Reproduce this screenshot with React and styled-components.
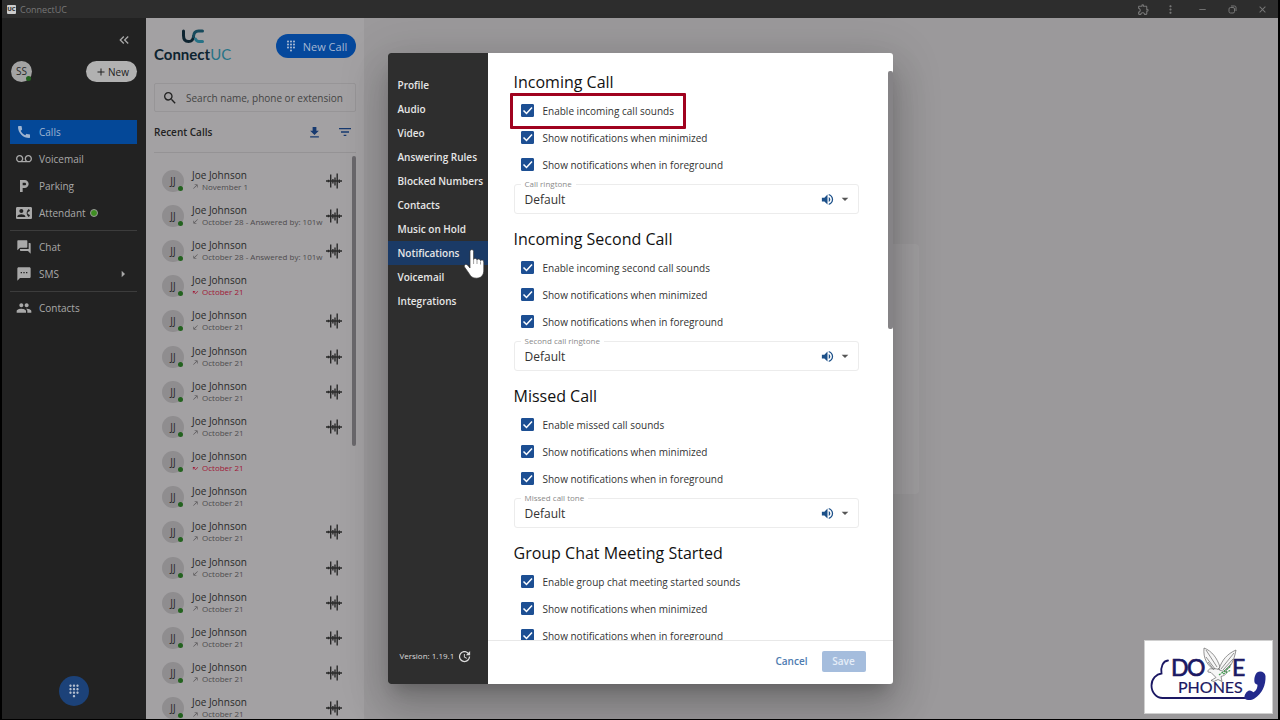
import React from "react";
import styled, { createGlobalStyle } from "styled-components";
import {
    MdAdd,
    MdArrowDropDown,
    MdArrowRight,
    MdCall,
    MdCallMade,
    MdCallMissed,
    MdCallReceived,
    MdClose,
    MdContactPhone,
    MdDialpad,
    MdFileDownload,
    MdFilterList,
    MdKeyboardDoubleArrowLeft,
    MdLocalParking,
    MdMoreVert,
    MdOutlineExtension,
    MdPeople,
    MdQuestionAnswer,
    MdRemove,
    MdSearch,
    MdSms,
    MdUpdate,
    MdVoicemail,
    MdVolumeUp,
} from "react-icons/md";

const calls = [
    { type: "out", info: "November 1", rec: true },
    { type: "in", info: "October 28 - Answered by: 101w", rec: true },
    { type: "in", info: "October 28 - Answered by: 101w", rec: true },
    { type: "missed", info: "October 21", rec: false },
    { type: "in", info: "October 21", rec: true },
    { type: "out", info: "October 21", rec: true },
    { type: "out", info: "October 21", rec: true },
    { type: "out", info: "October 21", rec: true },
    { type: "missed", info: "October 21", rec: false },
    { type: "out", info: "October 21", rec: false },
    { type: "out", info: "October 21", rec: true },
    { type: "in", info: "October 21", rec: true },
    { type: "out", info: "October 21", rec: true },
    { type: "out", info: "October 21", rec: true },
    { type: "out", info: "October 21", rec: true },
    { type: "out", info: "October 21", rec: true },
];

const callIcons = {
    out: MdCallMade,
    in: MdCallReceived,
    missed: MdCallMissed,
};

const tabs = [
    "Profile",
    "Audio",
    "Video",
    "Answering Rules",
    "Blocked Numbers",
    "Contacts",
    "Music on Hold",
    "Notifications",
    "Voicemail",
    "Integrations",
];

const sections = [
    { id: "call", title: "Incoming Call", sound: "Enable incoming call sounds", tone: "Call ringtone", marked: true },
    { id: "second", title: "Incoming Second Call", sound: "Enable incoming second call sounds", tone: "Second call ringtone" },
    { id: "missed", title: "Missed Call", sound: "Enable missed call sounds", tone: "Missed call tone" },
    { id: "group", title: "Group Chat Meeting Started", sound: "Enable group chat meeting started sounds" },
];

const Wave = () => (
    <svg width="16" height="16" viewBox="0 0 16 16" stroke="currentColor" strokeWidth="1.4" aria-hidden="true">
        <path d="M0 8h16M2.500 6.800v2.400M4.700 1.500v13M6.900 6v4.500M9 4.500v8M11.200 .5v15M13.300 6.500v3.500" />
    </svg>
);

const UcMark = () => (
    <svg width="24" height="15" viewBox="0 0 24 15" fill="none" strokeWidth="3" strokeLinecap="round" aria-hidden="true">
        <path stroke="#0e2430" d="M2.500 2v4.500c0 4 2 6 5 6 3.500 0 4.800-2.500 5-5" />
        <path stroke="#174a5c" d="M12.500 7.500c.3-4 2.300-5.500 5-5.500h4" />
        <path stroke="#287387" d="M14.500 10c.8 1.800 2 2.500 3.500 2.500h3.500" />
    </svg>
);

const Hand = () => (
    <HandSvg width="24" height="30" viewBox="0 0 24 30" aria-hidden="true">
        <path
            fill="#fff"
            stroke="#333"
            strokeWidth=".7"
            d="M7 2.500c0-2.500 3.600-2.500 3.600 0v8c.3-1.600 3.200-1.500 3.400.4.600-1.400 3.300-1.200 3.500.8.800-1.200 3.300-.8 3.300 1.300v8c0 5-2.500 8.200-7.300 8.200-4 0-5.800-1.600-7.500-4.800L1.500 18c-1-2.200 1.500-3.600 3.200-1.800L7 19z"
        />
        <path stroke="#777" strokeWidth=".7" d="M10.600 10v5M14 11v4M17.500 12.500v3" />
    </HandSvg>
);

const DoveLogo = () => (
    <Watermark>
        <svg viewBox="0 0 127 72" width="100%" height="100%" role="img" aria-label="Dove Phones">
            <path
                fill="none"
                stroke="#1b1863"
                strokeWidth="1.800"
                strokeLinecap="round"
                d="M23 19.500c-5 .5-7.500 6-6.500 13-5 .5-10 5-10 12 0 7 5 12.500 11 12.500h86"
            />
            <g fill="#1b1863" fontFamily="Lato, sans-serif">
                <g fontSize="23" stroke="#1b1863" strokeWidth=".7">
                    <text x="26" y="35">D</text>
                    <text x="42" y="35">O</text>
                    <text x="87" y="35">E</text>
                </g>
                <text x="33" y="52" fontSize="16" stroke="#1b1863" strokeWidth=".2">PHONES</text>
            </g>
            <path
                fill="#232a8c"
                d="M112 31.500c3.500-2 8-.5 8.500 3.500.5 9-3.500 18-11 22.500-4 2.500-7.500 1.800-10 0-.5-3.500 2-7.500 5-8 2 0 3 1.200 4 1.800 3-2 4-4.500 4-7.500-2.500-.8-3.200-2-3.200-4.500 0-3 1-6 2.700-7.800z"
            />
            <g fill="#f6f6f6" stroke="#666" strokeWidth=".7" strokeLinejoin="round">
                <path d="M59 7c8 3 13 10 16 19l-4 4C62 25 58 17 59 7z" />
                <path d="M91 9C82 13 77 19 74 28l4 4c7-4 11-12 13-23z" />
                <path d="M68 28c-3.500-1-5.500 1-5 3l3 .5 5 5-5 3 3 1 4-2 4 2-1-5c4-1 6-3 6-5-5 1-9-4-14-2.500z" />
                <path fill="none" d="M61 9l11 17M61 16l9 12M63 21l6 8M89 12L76 28M88 18l-10 11M86 23l-7 7" />
            </g>
            <path fill="none" stroke="#3c9a4a" strokeWidth="1.200" strokeDasharray="2 1" d="M74 34l12-9M78 33l8-4" />
        </svg>
    </Watermark>
);

const SideItem = ({ icon: Icon, label, active, children }) => (
    <SideLink href="#" $active={active}>
        <Icon size={16} />
        {label}
        {children}
    </SideLink>
);

const Check = ({ label, marked }) => (
    <CheckRow>
        <CheckBox>
            <input type="checkbox" defaultChecked />
            <svg viewBox="0 0 13 13" width="13" height="13" aria-hidden="true">
                <path d="M2.500 6.500l3 3 5.500-6" fill="none" stroke="#fff" strokeWidth="1.500" />
            </svg>
        </CheckBox>
        {label}
        {marked && <Marker />}
    </CheckRow>
);

const Section = ({ id, title, sound, tone, marked }) => (
    <Group>
        <GroupTitle>{title}</GroupTitle>
        <Check label={sound} marked={marked} />
        <Check label="Show notifications when minimized" />
        <Check label="Show notifications when in foreground" />
        {tone && (
            <Field>
                <FieldLabel htmlFor={id}>{tone}</FieldLabel>
                <Tone id={id} defaultValue="Default">
                    <option>Default</option>
                </Tone>
                <IconButton aria-label="Play tone" $color="#1c5089">
                    <MdVolumeUp size={15} />
                </IconButton>
                <MdArrowDropDown size={16} />
            </Field>
        )}
    </Group>
);

const App = () => {
    return (
        <Frame>
            <GlobalStyle />
            <TitleBar>
                <AppIcon>UC</AppIcon>
                <TitleText>ConnectUC</TitleText>
                <WindowTools>
                    <MdOutlineExtension size={13} />
                    <MdMoreVert size={13} />
                    <MdRemove size={11} />
                    <svg width="9" height="9" viewBox="0 0 9 9" fill="none" stroke="currentColor" aria-hidden="true">
                        <rect x="1" y="2.500" width="5.500" height="5.500" rx="1.500" />
                        <path d="M3 1h3.500a1.500 1.500 0 0 1 1.500 1.500V6" />
                    </svg>
                    <MdClose size={11} />
                </WindowTools>
            </TitleBar>
            <Body>
                <Sidebar>
                    <Collapse aria-label="Collapse">
                        <MdKeyboardDoubleArrowLeft size={16} />
                    </Collapse>
                    <Account>
                        <Avatar $size="21px" $me>
                            SS
                        </Avatar>
                        <NewButton>
                            <MdAdd size={12} />
                            New
                        </NewButton>
                    </Account>
                    <SideNav>
                        <SideItem icon={MdCall} label="Calls" active />
                        <SideItem icon={MdVoicemail} label="Voicemail" />
                        <SideItem icon={MdLocalParking} label="Parking" />
                        <SideItem icon={MdContactPhone} label="Attendant">
                            <Ring />
                        </SideItem>
                        <Divider />
                        <SideItem icon={MdQuestionAnswer} label="Chat" />
                        <SideItem icon={MdSms} label="SMS">
                            <MdArrowRight size={16} className="more" />
                        </SideItem>
                        <Divider />
                        <SideItem icon={MdPeople} label="Contacts" />
                    </SideNav>
                    <DialButton aria-label="Dialpad">
                        <MdDialpad size={14} />
                    </DialButton>
                </Sidebar>
                <Recent>
                    <Brand>
                        <Logo>
                            <UcMark />
                            <span>
                                Connect<em>UC</em>
                            </span>
                        </Logo>
                        <NewCall>
                            <MdDialpad size={12} />
                            New Call
                        </NewCall>
                    </Brand>
                    <Search>
                        <MdSearch size={16} />
                        <input aria-label="Search" placeholder="Search name, phone or extension" />
                    </Search>
                    <ListHead>
                        <h2>Recent Calls</h2>
                        <IconButton aria-label="Download" $color="#173a70">
                            <MdFileDownload size={15} />
                        </IconButton>
                        <IconButton aria-label="Filter" $color="#173a70">
                            <MdFilterList size={16} />
                        </IconButton>
                    </ListHead>
                    <ListView>
                        <CallList>
                            {calls.map((call, i) => {
                                const Icon = callIcons[call.type];
                                return (
                                    <CallRow key={i}>
                                        <Avatar $size="22px">JJ</Avatar>
                                        <CallText>
                                            <CallName>Joe Johnson</CallName>
                                            <CallInfo $missed={call.type === "missed"}>
                                                <Icon size={7} />
                                                {call.info}
                                            </CallInfo>
                                        </CallText>
                                        {call.rec && <Wave />}
                                    </CallRow>
                                );
                            })}
                        </CallList>
                        <ListThumb />
                    </ListView>
                </Recent>
                <Main>
                    <Card />
                </Main>
                <Overlay>
                    <Dialog role="dialog" aria-label="Settings">
                        <Tabs>
                            {tabs.map((tab) => (
                                <Tab key={tab} $active={tab === "Notifications"}>
                                    {tab}
                                    {tab === "Notifications" && <Hand />}
                                </Tab>
                            ))}
                            <Version>
                                Version: 1.19.1
                                <MdUpdate size={15} />
                            </Version>
                        </Tabs>
                        <Panel>
                            <PanelScroll>
                                {sections.map((section) => (
                                    <Section key={section.id} {...section} />
                                ))}
                                <PanelThumb />
                            </PanelScroll>
                            <Actions>
                                <TextButton>Cancel</TextButton>
                                <SaveButton>Save</SaveButton>
                            </Actions>
                        </Panel>
                    </Dialog>
                </Overlay>
            </Body>
            <DoveLogo />
        </Frame>
    );
};

const GlobalStyle = createGlobalStyle`
    * {
        box-sizing: border-box;
    }
    body {
        margin: 0;
        background: #000;
        font-family: "Open Sans", sans-serif;
        font-size: 10px;
    }
    button, input, select {
        font-family: inherit;
        margin: 0;
    }
    button {
        border: 0;
        padding: 0;
        background: none;
        cursor: pointer;
    }
    svg {
        flex: none;
        display: block;
    }
`;
const Frame = styled.div`
    display: flex;
    flex-direction: column;
    height: 100vh;
    padding: 0 2px 1px;
    overflow: hidden;
`;
const TitleBar = styled.header`
    display: flex;
    align-items: center;
    height: 18px;
    padding: 0 10px 0 5px;
    gap: 4px;
    background: #2d2d2d;
    color: #777;
`;
const AppIcon = styled.span`
    width: 9px;
    height: 9px;
    border-radius: 1px;
    background: #ccc;
    color: #222;
    font-size: 6px;
    line-height: 9px;
    font-weight: 700;
    text-align: center;
`;
const TitleText = styled.span`
    font-size: 9px;
`;
const WindowTools = styled.div`
    display: flex;
    align-items: center;
    gap: 20px;
    margin-left: auto;

    svg:first-child {
        margin-right: -6px;
    }
`;
const Body = styled.div`
    position: relative;
    display: flex;
    flex: 1;
    min-height: 0;
`;
const Sidebar = styled.aside`
    display: flex;
    flex-direction: column;
    width: 144px;
    padding: 14px 9px 13px 8px;
    background: #222222;
    color: #a9a9a9;
`;
const Collapse = styled.button`
    align-self: flex-end;
    margin-right: 5px;
    color: #a9a9a9;
`;
const Account = styled.div`
    display: flex;
    align-items: center;
    justify-content: space-between;
    margin: 13px 0 38px;
    padding-left: 1px;
`;
const Avatar = styled.span`
    position: relative;
    flex: none;
    width: ${(props) => props.$size};
    height: ${(props) => props.$size};
    line-height: ${(props) => props.$size};
    border-radius: 50%;
    background: ${(props) => (props.$me ? "#a3a3a3" : "#8f8d8f")};
    color: #2a2a2a;
    font-size: 10px;
    text-align: center;

    &::after {
        content: "";
        position: absolute;
        right: 1px;
        bottom: 1px;
        width: 5px;
        height: 5px;
        border-radius: 50%;
        background: #23621f;
    }
`;
const NewButton = styled.button`
    display: flex;
    align-items: center;
    gap: 1px;
    height: 21px;
    padding: 0 8px 0 9px;
    border-radius: 11px;
    background: #b1b1b1;
    color: #222;
    font-size: 10px;
`;
const SideNav = styled.nav`
    display: flex;
    flex-direction: column;
    gap: 3px;
`;
const SideLink = styled.a`
    display: flex;
    align-items: center;
    gap: 7px;
    height: 24px;
    padding: 0 6px;
    color: ${(props) => (props.$active ? "#9fb4d0" : "#a9a9a9")};
    background: ${(props) => (props.$active ? "#044898" : "transparent")};
    font-size: 10px;
    text-decoration: none;

    .more {
        margin-left: auto;
    }
`;
const Ring = styled.span`
    width: 8px;
    height: 8px;
    border: 1px solid #9a9a9a;
    border-radius: 50%;
    background: #3f8f22;
    margin-left: -3px;
`;
const Divider = styled.hr`
    width: 100%;
    height: 1px;
    margin: 2px 0 1px;
    border: 0;
    background: #3c3c3c;
`;
const DialButton = styled.button`
    display: flex;
    align-items: center;
    justify-content: center;
    width: 30px;
    height: 30px;
    margin: auto auto 0;
    border-radius: 50%;
    background: #1c4279;
    color: #b5bfd0;
`;
const Recent = styled.section`
    display: flex;
    flex-direction: column;
    width: 218px;
    padding: 10px 8px 0;
    background: #a3a1a3;
`;
const Brand = styled.div`
    display: flex;
    align-items: center;
    justify-content: space-between;
    height: 36px;
`;
const Logo = styled.div`
    display: flex;
    flex-direction: column;
    align-items: center;
    color: #0e2430;
    font-family: Lato, sans-serif;
    font-size: 15px;
    font-weight: 700;
    line-height: 20px;

    em {
        color: #287387;
        font-style: normal;
        font-weight: 400;
    }
`;
const NewCall = styled.button`
    display: flex;
    align-items: center;
    justify-content: center;
    gap: 6px;
    width: 80px;
    height: 24px;
    border-radius: 12px;
    background: #05489c;
    color: #a4b7d2;
    font-size: 11px;
`;
const Search = styled.label`
    display: flex;
    align-items: center;
    gap: 8px;
    height: 29px;
    margin-top: 19px;
    padding: 0 7px;
    border: 1px solid #979597;
    border-radius: 2px;
    color: #222;

    input {
        flex: 1;
        min-width: 0;
        padding: 0;
        border: 0;
        outline: 0;
        background: none;
        font-size: 10px;
    }
    input::placeholder {
        color: #444;
    }
`;
const ListHead = styled.div`
    display: flex;
    align-items: center;
    gap: 15px;
    height: 41px;
    padding-right: 3px;
    border-bottom: 1px solid #959395;

    h2 {
        flex: 1;
        margin: 0;
        color: #222;
        font-size: 10px;
        font-weight: 600;
    }
`;
const IconButton = styled.button`
    color: ${(props) => props.$color};
`;
const ListView = styled.div`
    position: relative;
    flex: 1;
    min-height: 0;
    padding-top: 10px;
    overflow: hidden;
`;
const CallList = styled.ul`
    display: grid;
    grid-template-columns: minmax(0, 1fr);
    grid-auto-rows: minmax(35px, 1fr);
    height: calc(100% + 7px);
    margin: 0;
    padding: 0 14px 0 8px;
    list-style: none;
`;
const CallRow = styled.li`
    display: flex;
    align-items: center;
    gap: 8px;
    color: #2a2a2a;
`;
const CallText = styled.div`
    flex: 1;
    min-width: 0;
`;
const CallName = styled.div`
    color: #2a2a2a;
    font-size: 10px;
    line-height: 12px;
`;
const CallInfo = styled.div`
    display: flex;
    align-items: center;
    gap: 3px;
    color: ${(props) => (props.$missed ? "#a01736" : "#4d4b4d")};
    font-size: 8px;
    line-height: 12px;
    white-space: nowrap;
`;
const ListThumb = styled.div`
    position: absolute;
    top: 3px;
    right: 0;
    width: 4px;
    height: 290px;
    border-radius: 2px;
    background: #6a686c;
`;
const Main = styled.main`
    display: flex;
    flex: 1;
    align-items: center;
    justify-content: center;
    background: #9b999b;
`;
const Card = styled.div`
    width: 196px;
    height: 250px;
    border-radius: 4px;
    background: #a09ea0;
`;
const Overlay = styled.div`
    position: absolute;
    inset: 0;
    display: flex;
    align-items: center;
    justify-content: center;
    padding: 35px;
`;
const Dialog = styled.div`
    display: flex;
    width: 505px;
    height: 100%;
    border-radius: 3px;
    background: #fff;
    box-shadow: 0 11px 15px -7px rgba(0, 0, 0, 0.2), 0 24px 38px 3px rgba(0, 0, 0, 0.14), 0 9px 46px 8px rgba(0, 0, 0, 0.12);
`;
const Tabs = styled.nav`
    display: flex;
    flex-direction: column;
    width: 100px;
    padding: 20px 0 18px;
    border-radius: 3px 0 0 3px;
    background: #2e2e2e;
`;
const Tab = styled.button`
    position: relative;
    height: 24px;
    padding: 0 0 0 10px;
    background: ${(props) => (props.$active ? "#1a3a66" : "transparent")};
    color: #e6e6e6;
    font-size: 10px;
    font-weight: 600;
    text-align: left;
    white-space: nowrap;
`;
const HandSvg = styled.svg`
    position: absolute;
    top: 8px;
    right: 1px;
    z-index: 1;
`;
const Version = styled.div`
    display: flex;
    align-items: center;
    gap: 3px;
    margin-top: auto;
    padding-left: 12px;
    color: #dcdcdc;
    font-size: 8px;
    line-height: 20px;
`;
const Panel = styled.div`
    display: flex;
    flex: 1;
    flex-direction: column;
    min-width: 0;
`;
const PanelScroll = styled.div`
    position: relative;
    flex: 1;
    min-height: 0;
    padding: 17px 34px 0 26px;
    overflow: hidden;
`;
const PanelThumb = styled.div`
    position: absolute;
    top: 18px;
    right: 0;
    width: 5px;
    height: 258px;
    border-radius: 2px;
    background: #858386;
`;
const Group = styled.section`
    margin-bottom: 13px;
`;
const GroupTitle = styled.h2`
    margin: 0 0 3px;
    color: #111;
    font-size: 16px;
    font-weight: 400;
    line-height: 24px;
`;
const CheckRow = styled.label`
    position: relative;
    display: flex;
    align-items: center;
    gap: 9px;
    height: 27px;
    padding-left: 7px;
    color: #333;
    font-size: 10px;
`;
const CheckBox = styled.span`
    display: grid;
    width: 13px;
    height: 13px;

    > * {
        grid-area: 1 / 1;
    }
    input {
        appearance: none;
        width: 13px;
        height: 13px;
        border: 1px solid #1d4f93;
        border-radius: 1px;
    }
    input:checked {
        background: #1d4f93;
    }
    svg {
        pointer-events: none;
    }
`;
const Marker = styled.span`
    position: absolute;
    top: -4px;
    left: -4px;
    width: 176px;
    height: 36px;
    border: 3px solid #a0021f;
    border-radius: 1px;
`;
const Field = styled.div`
    position: relative;
    display: flex;
    align-items: center;
    height: 30px;
    margin-top: 6px;
    padding-right: 5px;
    border: 1px solid #ececec;
    border-radius: 3px;
    color: #555;

    > button {
        margin-right: 2px;
    }
`;
const FieldLabel = styled.label`
    position: absolute;
    top: -7px;
    left: 6px;
    padding: 0 4px;
    background: #fff;
    color: #8a8a8a;
    font-size: 8px;
    line-height: 11px;
`;
const Tone = styled.select`
    flex: 1;
    height: 100%;
    padding: 0 10px;
    border: 0;
    outline: 0;
    appearance: none;
    background: none;
    color: #333;
    font-size: 12px;
`;
const Actions = styled.footer`
    display: flex;
    align-items: center;
    justify-content: flex-end;
    gap: 14px;
    height: 44px;
    padding: 0 27px 3px;
    border-top: 1px solid #e8e8e8;
`;
const TextButton = styled.button`
    color: #4d7bb0;
    font-size: 10px;
    font-weight: 600;
`;
const SaveButton = styled.button`
    width: 44px;
    height: 21px;
    border-radius: 2px;
    background: #a5bddd;
    color: #e6eef8;
    font-size: 10px;
    font-weight: 600;
`;
const Watermark = styled.div`
    position: fixed;
    right: 7px;
    bottom: 6px;
    width: 129px;
    height: 74px;
    border: 1px solid #d0d0d0;
    background: #fff;
`;

export default App;
